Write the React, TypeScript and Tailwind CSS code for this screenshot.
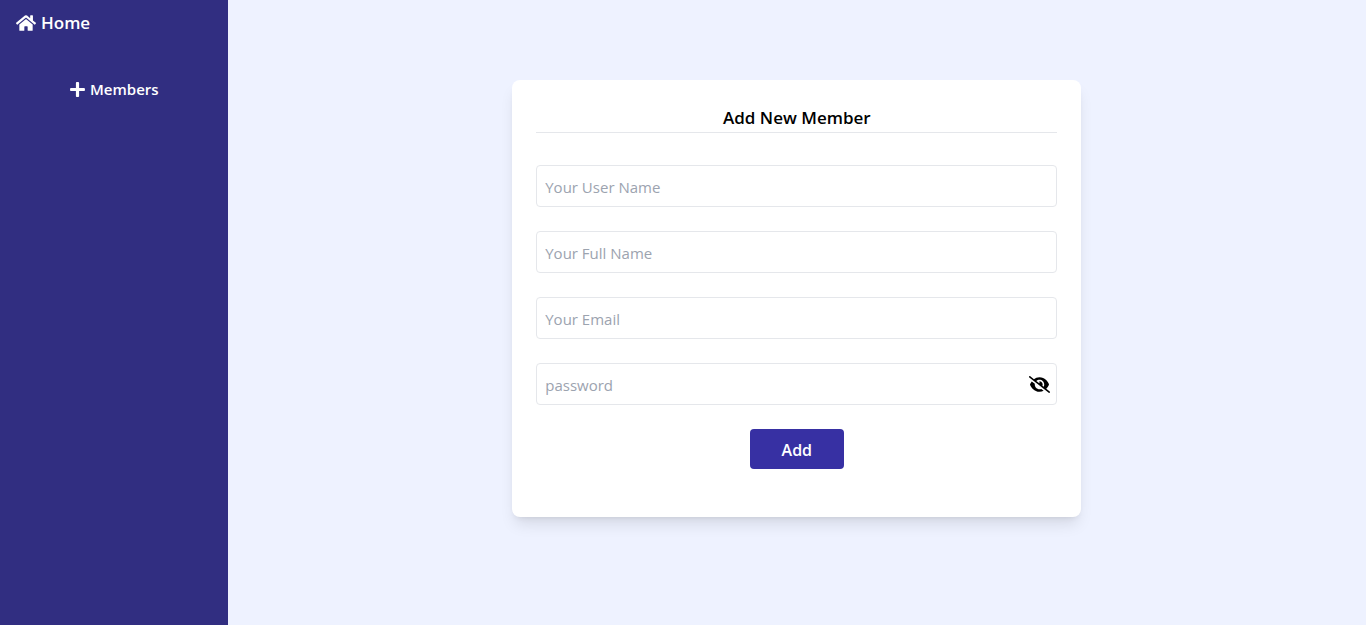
import { useState } from "react";
import type { FormEvent } from "react";
import { FaHome, FaPlus } from "react-icons/fa";
import { FaEye, FaEyeSlash } from "react-icons/fa6";

const fields = [
  { id: "username", type: "text", placeholder: "Your User Name" },
  { id: "fullname", type: "text", placeholder: "Your Full Name" },
  { id: "email", type: "email", placeholder: "Your Email" },
];

const inputClass =
  "block w-full rounded border border-[#e5e7eb] bg-white px-2 pt-[9px] pb-[7px] text-[15px] leading-6 text-black outline-none placeholder:text-[#9ca3af] focus:border-[#3730a3]";

function Sidebar() {
  return (
    <aside className="w-1/6 shrink-0 bg-[#312e81] text-white">
      <a href="#home" className="flex items-center gap-[5px] px-4 pt-[9px] text-[17px] leading-7 font-semibold">
        <FaHome size={20} />
        <span>Home</span>
      </a>
      <nav className="mt-10 flex justify-center">
        <a href="#members" className="flex items-center gap-1 text-[15px] leading-6 font-semibold">
          <FaPlus size={17} />
          <span>Members</span>
        </a>
      </nav>
    </aside>
  );
}

function MemberForm() {
  const [visible, setVisible] = useState(false);
  const submit = (event: FormEvent) => event.preventDefault();

  return (
    <form
      onSubmit={submit}
      className="w-1/2 rounded-lg bg-white px-6 pt-6 pb-12 shadow-[0_10px_15px_-3px_rgba(0,0,0,0.1),0_4px_6px_-4px_rgba(0,0,0,0.1)]"
    >
      <h1 className="mb-8 border-b border-[#e5e7eb] text-center text-[17px] leading-7 font-semibold text-black">
        Add New Member
      </h1>
      <div className="flex flex-col gap-6">
        {fields.map((field) => (
          <div key={field.id}>
            <label htmlFor={field.id} className="sr-only">
              {field.placeholder}
            </label>
            <input
              id={field.id}
              type={field.type}
              placeholder={field.placeholder}
              className={inputClass}
            />
          </div>
        ))}
        <div className="relative">
          <label htmlFor="password" className="sr-only">
            password
          </label>
          <input
            id="password"
            type={visible ? "text" : "password"}
            placeholder="password"
            className={inputClass}
          />
          <button
            type="button"
            aria-label="Toggle password visibility"
            onClick={() => setVisible(!visible)}
            className="absolute inset-y-0 right-[7px] flex items-center text-black"
          >
            {visible ? <FaEye size={21} /> : <FaEyeSlash size={21} />}
          </button>
        </div>
        <button
          type="submit"
          className="self-center rounded bg-[#3730a3] px-8 pt-[9px] pb-[7px] text-base leading-6 font-semibold text-white"
        >
          Add
        </button>
      </div>
    </form>
  );
}

export default function App() {
  return (
    <div className="flex min-h-screen bg-[#eef2ff] font-['Segoe_UI','Open_Sans',sans-serif]">
      <Sidebar />
      <main className="flex flex-1 items-start justify-center py-20">
        <MemberForm />
      </main>
    </div>
  );
}
